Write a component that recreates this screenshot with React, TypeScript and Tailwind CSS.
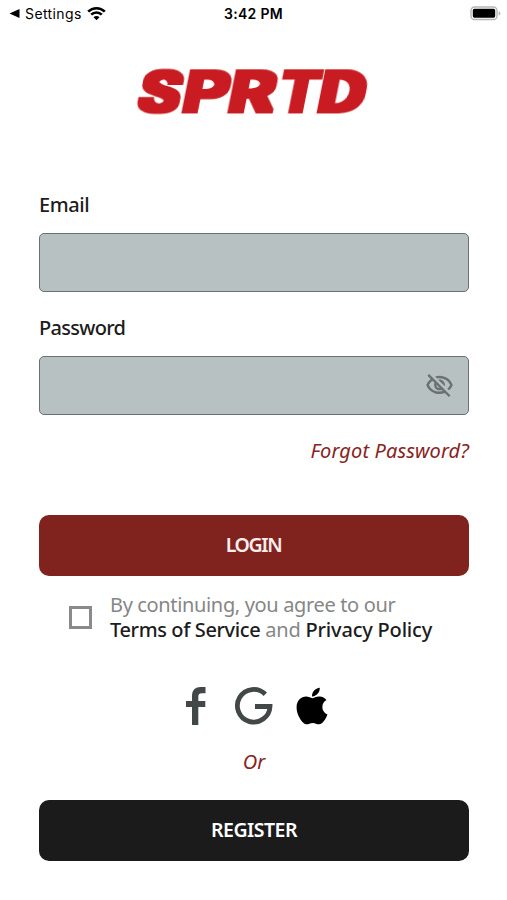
import React from 'react';
import { FaApple } from 'react-icons/fa';
import { MdOutlineVisibilityOff } from 'react-icons/md';

const StatusBar: React.FC = () => (
  <header className="grid h-7 grid-cols-3 items-center pl-[9px] pr-[6px] font-['Inter',sans-serif] text-[14px] text-black">
    <div className="flex items-center pb-px">
      <svg className="mr-[5px] h-[9px] w-[11px]" viewBox="0 0 11 9">
        <path d="M0.5 4.5 10.5 0v9z" />
      </svg>
      <span className="tracking-[0.4px]">Settings</span>
      <svg className="ml-[5px] h-[15px] w-[19px]" viewBox="0 0 19 15" fill="none" stroke="#000" strokeWidth="2.6">
        <path d="M1.2 5.6a11.8 11.8 0 0 1 16.6 0" />
        <path d="M4.2 8.7a7.5 7.5 0 0 1 10.6 0" />
        <path d="M9.5 14.2 6.5 11.2a4.2 4.2 0 0 1 6 0z" fill="#000" stroke="none" />
      </svg>
    </div>
    <span className="pr-[3px] pb-px text-center font-semibold tracking-[0.3px]">3:42 PM</span>
    <div className="flex items-center justify-end pb-[2px]">
      <svg className="h-[15px] w-[31px]" viewBox="0 0 31 15">
        <rect x="1" y="1" width="26" height="12.5" rx="3.6" fill="none" stroke="#b5b5b5" strokeWidth="1.4" />
        <rect x="2.8" y="2.8" width="22.4" height="8.9" rx="1.6" />
        <path d="M28.6 5.2c2.4.7 2.4 3.6 0 4.3z" fill="#b5b5b5" />
      </svg>
    </div>
  </header>
);

const LOGO_LETTERS = [
  { char: 'S', x: 2.2, width: 41 },
  { char: 'P', x: 46.2, width: 45 },
  { char: 'R', x: 92, width: 46 },
  { char: 'T', x: 143.5, width: 36.5 },
  { char: 'D', x: 181.3, width: 47 },
];

// The square dilate kernel turns the letterforms into heavy block ones
const Logo: React.FC = () => (
  <svg className="mt-[36px] h-[56px] w-[240px] self-center overflow-visible" viewBox="0 0 240 56">
    <defs>
      <filter id="block" filterUnits="userSpaceOnUse" x="-10" y="-60" width="270" height="80">
        <feMorphology operator="dilate" radius="2.75 1.5" />
      </filter>
    </defs>
    <g transform="translate(0 47.5) skewX(-11.3)" filter="url(#block)">
      <text y="0" fontFamily="Roboto, sans-serif" fontWeight="700" fontSize="56.5" fill="#c81e20">
        {LOGO_LETTERS.map(({ char, x, width }) => (
          <tspan key={char} x={x} textLength={width} lengthAdjust="spacingAndGlyphs">
            {char}
          </tspan>
        ))}
      </text>
    </g>
  </svg>
);

interface FieldProps {
  label: string;
  type: string;
  className?: string;
  labelClassName?: string;
  children?: React.ReactNode;
}

const Field: React.FC<FieldProps> = ({ label, type, className, labelClassName, children }) => (
  <label className={className}>
    <span className={`block h-7 text-[20px] leading-7 font-medium text-[#1c1c1c] ${labelClassName}`}>{label}</span>
    <span className="mt-[14px] flex h-[59px] items-center rounded-[5px] border-[1.5px] border-[#697172] bg-[#b8c1c2] pr-[14px]">
      <input type={type} className="h-full min-w-0 flex-1 bg-transparent px-4 outline-none" />
      {children}
    </span>
  </label>
);

const SocialIcons: React.FC = () => (
  <div className="mt-[43px] flex h-[42px] items-center pl-[146px]">
    <svg className="h-[40px] w-[22px]" viewBox="0 0 22 40" fill="#424848">
      <path d="M7 39V21H1v-6h6V10c0-6 3.5-9 8.5-9H20.5v6.2H17c-2.6 0-3.7 1-3.7 3.5V15h7v6h-7v18z" />
    </svg>
    <svg className="ml-[27px] h-[40px] w-[40px]" viewBox="0 0 40 40" fill="none" stroke="#424848" strokeWidth="4.8">
      <path d="M31.3 8.3A16.3 16.3 0 1 0 36 20.5H21" />
    </svg>
    <FaApple className="ml-[21px] h-[42px] w-[34px] text-black" />
  </div>
);

export default function App() {
  return (
    <main className="flex h-[900px] w-full flex-col bg-white font-['Noto_Sans',sans-serif]">
      <StatusBar />
      <Logo />
      <form className="mr-[38px] ml-[39px] mt-[71px] flex flex-col">
        <Field label="Email" type="email" labelClassName="tracking-[-0.4px]" />
        <Field label="Password" type="password" className="mt-[22px]" labelClassName="tracking-[-0.7px]">
          <MdOutlineVisibilityOff className="size-[29px] text-[#697172]" />
        </Field>
        <a className="mt-[22px] h-7 self-end text-[20px] leading-7 tracking-[0.12px] text-[#872321] italic">
          Forgot Password?
        </a>
        <button
          type="button"
          className="mt-[50px] h-[61px] rounded-[10px] bg-[#80231f] pr-[1px] pb-[2px] text-[19.5px] font-semibold tracking-[-1.4px] text-[#fbeeed]"
        >
          LOGIN
        </button>
        <div className="mt-[17px] flex items-center pl-[30px]">
          <span className="size-[23px] border-[3px] border-[#8a8a8a]" />
          <p className="ml-[18px] text-[20px] leading-[24.5px] whitespace-nowrap text-[#868686]">
            <span className="block tracking-[-0.35px]">By continuing, you agree to our</span>
            <span className="block tracking-[-0.2px]">
              <b className="font-medium tracking-[-0.38px] text-[#1c1c1c]">Terms of Service</b> and{' '}
              <b className="font-medium text-[#1c1c1c]">Privacy Policy</b>
            </span>
          </p>
        </div>
        <SocialIcons />
        <span className="mt-[21px] h-7 text-center text-[20px] leading-7 text-[#872321] italic">Or</span>
        <button
          type="button"
          className="mt-[24px] h-[61px] rounded-[10px] bg-[#1b1b1b] pb-[2px] text-[19.5px] font-semibold tracking-[-0.5px] text-white"
        >
          REGISTER
        </button>
      </form>
    </main>
  );
}
